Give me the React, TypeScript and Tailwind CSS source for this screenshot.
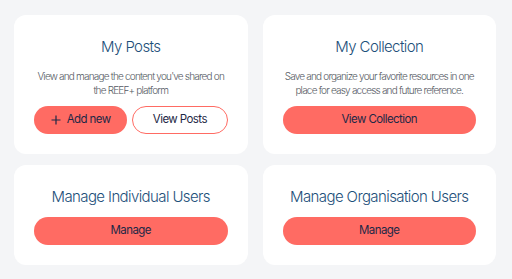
import React from "react";

const font = { fontFamily: "Inter, 'Liberation Sans', sans-serif" };

function Btn({ children, outline }: { children: React.ReactNode; outline?: boolean }) {
  return (
    <button
      className={
        outline
          ? "flex h-[28px] flex-1 items-center justify-center rounded-full border border-[#ff6b63] bg-white text-[11.5px] tracking-[-0.05em] text-[#1e2846]"
          : "flex h-[28px] flex-1 items-center justify-center rounded-full bg-[#ff6b63] text-[11.5px] tracking-[-0.05em] text-[#1e2846]"
      }
    >
      {children}
    </button>
  );
}

const title = "h-[20px] whitespace-nowrap text-[15px] font-light leading-[20px] tracking-[-0.04em] text-[#1d4f7a]";
const desc = "mt-[12px] h-[28px] whitespace-nowrap text-center text-[10px] font-light leading-[14px] tracking-[-0.08em] text-[#555a63]";

export default function App() {
  return (
    <div
      className="min-h-[279px] w-[512px] bg-[#f4f5f7] pt-[15px] pl-[14px] pr-[16px] pb-[14px]"
      style={font}
    >
      <div className="grid grid-cols-2 gap-x-[15px] gap-y-[11px]">
        <div className="flex h-[139px] flex-col items-center rounded-xl bg-white px-[20px] pt-[22px] pb-[20px]">
          <div className={title}>My Posts</div>
          <div className={desc}>
            View and manage the content you've shared on
            <br />
            the REEF+ platform
          </div>
          <div className="mt-[9px] flex w-full gap-[5px]">
            <Btn>
              <svg width="10" height="10" viewBox="0 0 10 10" className="mr-[6px]">
                <path d="M5 0.5v9M0.5 5h9" stroke="#1e2846" strokeWidth="1.2" fill="none" />
              </svg>
              Add new
            </Btn>
            <Btn outline>View Posts</Btn>
          </div>
        </div>
        <div className="flex h-[139px] flex-col items-center rounded-xl bg-white px-[20px] pt-[22px] pb-[20px]">
          <div className={title}>My Collection</div>
          <div className={desc}>
            Save and organize your favorite resources in one
            <br />
            place for easy access and future reference.
          </div>
          <div className="mt-[9px] flex w-full">
            <Btn>View Collection</Btn>
          </div>
        </div>
        <div className="flex h-[100px] flex-col items-center rounded-xl bg-white px-[20px] pt-[22px] pb-[20px]">
          <div className={title}>Manage Individual Users</div>
          <div className="mt-[10px] flex w-full">
            <Btn>Manage</Btn>
          </div>
        </div>
        <div className="flex h-[100px] flex-col items-center rounded-xl bg-white px-[20px] pt-[22px] pb-[20px]">
          <div className={title}>Manage Organisation Users</div>
          <div className="mt-[10px] flex w-full">
            <Btn>Manage</Btn>
          </div>
        </div>
      </div>
    </div>
  );
}
